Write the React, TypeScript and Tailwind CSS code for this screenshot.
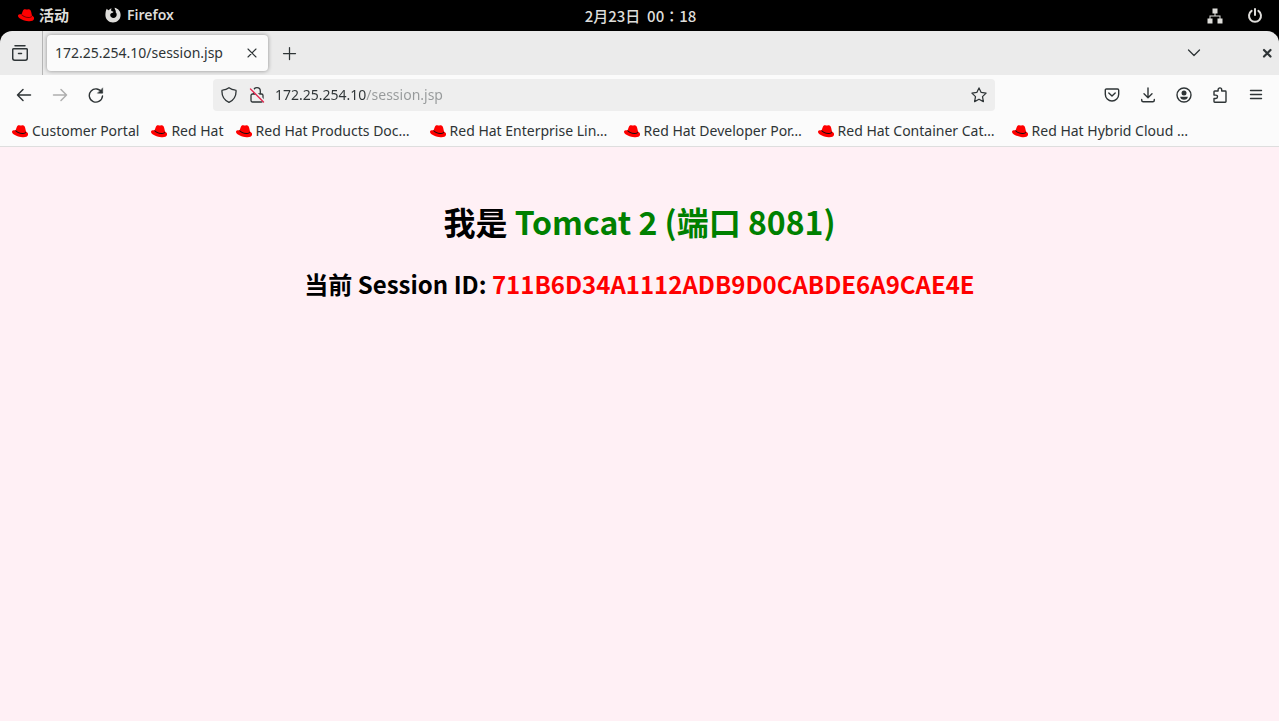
import { useState } from "react";

type Bookmark = {
  label: string;
  href: string;
  wide?: boolean;
};

const bookmarks: Bookmark[] = [
  { label: "Customer Portal", href: "#customer-portal" },
  { label: "Red Hat", href: "#red-hat" },
  { label: "Red Hat Products Doc…", href: "#products", wide: true },
  { label: "Red Hat Enterprise Lin…", href: "#enterprise", wide: true },
  { label: "Red Hat Developer Por…", href: "#developer", wide: true },
  { label: "Red Hat Container Cat…", href: "#container", wide: true },
  { label: "Red Hat Hybrid Cloud …", href: "#hybrid", wide: true },
];

function RedHat({ band }: { band: string }) {
  return (
    <svg viewBox="0 0 16 16" className="size-4 shrink-0" aria-hidden="true">
      <path
        fill="#f00"
        d="M3.600 7.200 4.800 4C5.200 2.700 6.100 2 7.200 2.200l1.200.3c.4.100.7 0 1.100-.1 1.200-.4 2.400-.1 3 .9.300.6.5 1.100.7 1.800l.8 3.400c1.300.8 2.200 1.700 2.100 2.900-.1 2.300-2.700 3.100-5.700 2.800C6.800 13.800.2 11.800 0 8.900c-.1-1.400 1.500-1.900 3.600-1.700Z"
      />
      <path
        fill={band}
        d="M3.700 7c.8 1.600 3.700 2.800 6.600 2.900 1.700 0 3-.3 3.500-1.500l.2.900c-.2 1.200-1.600 1.800-3.500 1.700-3-.1-6.200-1.500-7.100-3Z"
      />
    </svg>
  );
}

function FirefoxLogo() {
  return (
    <svg viewBox="0 0 16 16" className="size-4" fill="#deddda" aria-hidden="true">
      <path d="M1.800 1.800 3.200 3.200C4 2.900 4.700 2 6.600 1.200 6 2.200 6 3.200 6.500 4l2 .7c-.1.800-1.300 1.200-2.300 1.600-.7.400-1 1-1 1.800 0 1.700 1.400 2.900 3.200 2.900 2 0 3.300-1.400 3.300-3.300 0-1.300-.6-2.300-1.600-3l1 .1C10.800 3.700 10 2.700 9.500.8c3.700.7 6.100 3.500 6.100 7.200 0 4.300-3.300 7.500-7.600 7.500S.4 12.300.4 8c0-2.400.4-4.500 1.400-6.200Z" />
    </svg>
  );
}

const line = {
  viewBox: "0 0 16 16",
  fill: "none",
  stroke: "currentColor",
  strokeWidth: 1.25,
  strokeLinecap: "round",
  strokeLinejoin: "round",
  "aria-hidden": true,
} as const;

function TopBar() {
  return (
    <header className="grid h-[31px] grid-cols-3 items-center bg-black pr-4 pl-[18px] text-sm font-semibold text-[#deddda]">
      <div className="flex items-center gap-9">
        <button type="button" className="flex items-center gap-[5px] text-[15px]">
          <RedHat band="#700" />
          活动
        </button>
        <button type="button" className="flex items-center gap-[6px]">
          <FirefoxLogo />
          Firefox
        </button>
      </div>
      <button
        type="button"
        className="font-['Noto_Sans_CJK_TC',sans-serif] text-[15px] leading-5 font-medium whitespace-pre"
      >
        2月23日  00：18
      </button>
      <div className="flex items-center justify-end gap-6">
        <button type="button" aria-label="Network">
          <svg viewBox="0 0 16 16" className="size-4" fill="#deddda" aria-hidden="true">
            <path d="M5.500.5h5v5h-2v2H13.500v3H15.500v5h-5v-5h2v-2h-9v2h2v5h-5v-5h2v-3h5v-2h-2Z" />
          </svg>
        </button>
        <button type="button" aria-label="Power">
          <svg {...line} strokeWidth={2} className="size-4">
            <path d="M8 1v6M4.600 2.900a6 6 0 1 0 6.800 0" />
          </svg>
        </button>
      </div>
    </header>
  );
}

function TabStrip() {
  return (
    <div className="flex h-11 items-center rounded-t-xl bg-[#ebebeb]">
      <div className="flex h-full w-[43px] items-center border-r border-[#b5b5b5] pl-3">
        <button type="button" aria-label="View recent browsing">
          <svg {...line} strokeWidth={1.500} className="size-4">
            <path d="M3 .8h10M1.700 3.700h12.600c.6 0 1 .4 1 1v8.600c0 1-.8 1.900-1.900 1.900H2.600c-1 0-1.900-.8-1.900-1.900V4.700c0-.6.4-1 1-1ZM6.500 8.500h3" />
          </svg>
        </button>
      </div>
      <div className="ml-1 flex h-9 w-[221px] items-center justify-between rounded bg-[#fbfbfb] px-2 shadow-[0_0_4px_rgba(0,0,0,0.4)]">
        <button type="button" className="whitespace-nowrap">
          172.25.254.10/session.jsp
        </button>
        <button type="button" aria-label="Close tab">
          <svg {...line} strokeWidth={1.100} className="size-4">
            <path d="m4 4 8 8M12 4l-8 8" />
          </svg>
        </button>
      </div>
      <button type="button" aria-label="New tab" className="ml-[13px]">
        <svg {...line} className="size-4">
          <path d="M8.500 2.500v12M2.500 8.500h12" />
        </svg>
      </button>
      <div className="ml-auto flex items-center gap-[57px] pr-1">
        <button type="button" aria-label="List all tabs">
          <svg {...line} className="size-4">
            <path d="m2.500 5 5.500 5.500L13.500 5" />
          </svg>
        </button>
        <button type="button" aria-label="Close window">
          <svg {...line} strokeWidth={2.200} className="size-4">
            <path d="m5 5 6.500 6.500M11.500 5 5 11.500" />
          </svg>
        </button>
      </div>
    </div>
  );
}

function NavBar() {
  const [url, setUrl] = useState("172.25.254.10/session.jsp");

  return (
    <div className="flex h-10 items-center gap-[109px] bg-[#fbfbfb] pr-[15px] pl-4">
      <div className="flex items-center gap-5">
        <button type="button" aria-label="Back">
          <svg {...line} strokeWidth={1.500} className="size-4">
            <path d="M14.500 8H1.500M7 2.500 1.500 8 7 13.500" />
          </svg>
        </button>
        <button type="button" aria-label="Forward" disabled className="text-[#aeaeae]">
          <svg {...line} strokeWidth={1.500} className="size-4">
            <path d="M1.500 8h13M9 2.500 14.500 8 9 13.500" />
          </svg>
        </button>
        <button type="button" aria-label="Reload">
          <svg {...line} strokeWidth={1.400} className="size-4">
            <path d="M13.800 5.500A6.600 6.600 0 1 0 14.500 9" />
            <path fill="currentColor" strokeWidth={0.500} d="M14.700 1.200v5H9.700Z" />
          </svg>
        </button>
      </div>
      <div className="flex h-8 flex-1 items-center rounded bg-[#eeeeee] px-2">
        <button type="button" aria-label="Tracking protection">
          <svg {...line} strokeWidth={1.300} className="size-4">
            <path d="M8 .7c2.300 1.800 4.200 2.300 6.500 2.500.4 0 .6.300.6.700 0 5-2 9.100-7.100 11.400C2.900 13 .9 8.900.9 3.900c0-.4.2-.7.6-.7C3.800 3 5.700 2.500 8 .7Z" />
          </svg>
        </button>
        <button type="button" aria-label="Connection not secure" className="ml-3">
          <svg {...line} strokeWidth={1.300} className="size-4">
            <path d="M4.700 7V4a3.300 3.300 0 0 1 6.600 0v3M3.500 7h9c.8 0 1.500.7 1.500 1.500v5c0 .8-.7 1.500-1.500 1.500h-9c-.8 0-1.500-.7-1.500-1.500v-5C2 7.700 2.700 7 3.500 7Z" />
            <path stroke="#eeeeee" strokeWidth={2.500} d="m2.500 1.500 13 13" />
            <path stroke="#e22850" d="m1.500 2 13 13" />
          </svg>
        </button>
        <input
          type="text"
          aria-label="Address"
          value={url}
          onChange={(e) => setUrl(e.target.value)}
          className="ml-[10px] min-w-0 flex-1 bg-[linear-gradient(90deg,#2e3436_91px,#96999a_91px)] bg-clip-text text-sm text-transparent caret-black outline-none"
        />
        <button type="button" aria-label="Bookmark this page">
          <svg {...line} className="size-4">
            <path d="m8 .9 2.200 4.500 4.900.7-3.600 3.500.9 5L8 12.200l-4.400 2.400.9-5L.9 6.100l4.900-.7Z" />
          </svg>
        </button>
      </div>
      <div className="flex items-center gap-5">
        <button type="button" aria-label="Save to Pocket">
          <svg {...line} strokeWidth={1.400} className="size-4">
            <path d="M2.500 2h11c.7 0 1.200.5 1.200 1.200v4.100a6.700 6.700 0 0 1-13.400 0V3.200C1.300 2.500 1.800 2 2.500 2ZM4.800 6 8 9l3.200-3" />
          </svg>
        </button>
        <button type="button" aria-label="Downloads">
          <svg {...line} strokeWidth={1.400} className="size-4">
            <path d="M8 1v9.500M4 6.700l4 4 4-4M1.700 12.500v.8c0 .8.7 1.500 1.500 1.500h9.600c.8 0 1.500-.7 1.500-1.500v-.8" />
          </svg>
        </button>
        <button type="button" aria-label="Account">
          <svg {...line} strokeWidth={1.400} className="size-4">
            <circle cx="8" cy="8" r="7" />
            <circle cx="8" cy="6" r="2.500" fill="currentColor" stroke="none" />
            <path fill="currentColor" stroke="none" d="M4.200 9.800h7.600c0 1.800-1.600 3-3.800 3s-3.800-1.200-3.800-3Z" />
          </svg>
        </button>
        <button type="button" aria-label="Extensions">
          <svg {...line} strokeWidth={1.400} className="size-4">
            <path d="M2 4.700c0-.4.300-.7.700-.7h3.400V2.700a1.800 1.800 0 0 1 3.600 0V4h3.600c.4 0 .7.3.7.7v9.900c0 .4-.3.700-.7.700H2.700c-.4 0-.7-.3-.7-.7v-3.100h1.800a1.700 1.700 0 0 0 0-3.400H2Z" />
          </svg>
        </button>
        <button type="button" aria-label="Open application menu">
          <svg {...line} strokeWidth={1.400} className="size-4">
            <path d="M2.500 3.500h11M2.500 7.500h11M2.500 11.500h11" />
          </svg>
        </button>
      </div>
    </div>
  );
}

export default function App() {
  return (
    <div className="flex min-h-screen flex-col bg-black font-['Noto_Sans','Noto_Sans_CJK_SC',sans-serif] text-sm text-[#2e3436]">
      <TopBar />
      <TabStrip />
      <NavBar />
      <nav className="flex h-8 items-center gap-3 overflow-hidden border-b border-[#dedede] bg-[#fbfbfb] px-3 whitespace-nowrap">
        {bookmarks.map((item) => (
          <a key={item.label} href={item.href} className="flex shrink-0 items-center gap-1">
            <RedHat band="#111" />
            <span className={item.wide ? "w-[162px]" : undefined}>{item.label}</span>
          </a>
        ))}
      </nav>
      <main className="flex-1 bg-[#fff0f5] pt-[50px] text-center font-['Noto_Sans_CJK_SC',sans-serif] font-bold text-black">
        <h1 className="text-[32px] leading-[48px]">
          我是 <span className="text-[#008000]">Tomcat 2 (端口 8081)</span>
        </h1>
        <h2 className="mt-[21px] text-2xl leading-9">
          当前 Session ID: <span className="text-[#ff0000]">711B6D34A1112ADB9D0CABDE6A9CAE4E</span>
        </h2>
      </main>
    </div>
  );
}
